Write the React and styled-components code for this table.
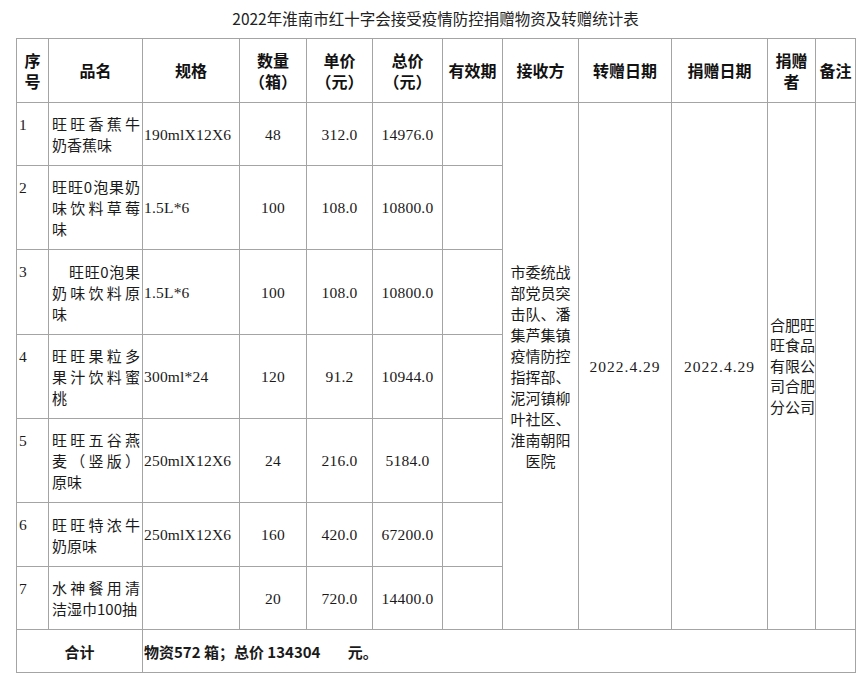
import React from "react";
import styled, { createGlobalStyle } from "styled-components";

const GlobalStyle = createGlobalStyle`
  html, body { margin: 0; padding: 0; background: #ffffff; }
  body { font-family: "Noto Sans CJK SC", "Noto Sans", sans-serif; color: #111; }
`;

const CJK = `"Noto Sans CJK SC", "Noto Sans", sans-serif`;
const SERIF = `"Liberation Serif", "Noto Sans CJK SC", serif`;

const Page = styled.div`
  padding-left: 16px;
  width: 839px;
`;

const Title = styled.h1`
  margin: 0;
  height: 38px;
  line-height: 36px;
  text-align: center;
  font-family: ${CJK};
  font-weight: 400;
  font-size: 15.5px;
  color: #222;
`;

const Table = styled.table`
  width: 839px;
  border-collapse: collapse;
  table-layout: fixed;
  border: 1px solid #9c9c9c;
`;

const Row = styled.tr`
  height: ${(p) => p.$h}px;
`;

const Cell = styled.td`
  border: 1px solid #a4a4a4;
  padding: 0;
  font-size: 15px;
  line-height: 21px;
  vertical-align: middle;
  text-align: center;
  color: #1a1a1a;
  font-family: ${CJK};
`;

const HeadCell = styled(Cell).attrs({ as: "th" })`
  font-weight: 700;
  font-size: 16px;
  line-height: 21px;
  color: #111;
`;

const SerialCell = styled(Cell)`
  vertical-align: top;
  text-align: left;
  padding: 11px 0 0 2px;
  font-family: ${SERIF};
  font-size: 15.5px;
`;

const NameCell = styled(Cell)`
  text-align: justify;
  padding: 0 2px 0 3px;
  text-indent: ${(p) => (p.$indent ? "17px" : "0")};
`;

const NumCell = styled(Cell)`
  font-family: ${SERIF};
  font-size: 15.5px;
  letter-spacing: ${(p) => (p.$wide ? "1px" : "0.2px")};
  text-align: ${(p) => (p.$left ? "left" : "center")};
  padding: ${(p) => (p.$left ? "0 0 0 1px" : "0")};
`;

const BlockCell = styled(Cell)`
  text-align: ${(p) => (p.$left ? "left" : "center")};
  padding: ${(p) => (p.$left ? "0 0 0 2px" : "0 3px")};
  line-height: ${(p) => (p.$lh ? p.$lh : 21)}px;
`;

const TotalLabel = styled(Cell)`
  font-weight: 700;
  font-size: 15px;
`;

const TotalText = styled(Cell)`
  font-weight: 700;
  font-size: 15px;
  text-align: left;
  padding-left: 1px;
  white-space: pre;
`;

const cols = [32, 94, 97, 67, 66, 70, 60, 76, 93, 96, 48, 40];

const items = [
  { n: "1", name: "旺旺香蕉牛奶香蕉味", spec: "190mlX12X6", qty: "48", price: "312.0", total: "14976.0", h: 63 },
  { n: "2", name: "旺旺0泡果奶味饮料草莓味", spec: "1.5L*6", qty: "100", price: "108.0", total: "10800.0", h: 84 },
  { n: "3", name: "旺旺0泡果奶味饮料原味", spec: "1.5L*6", qty: "100", price: "108.0", total: "10800.0", h: 85, indent: true },
  { n: "4", name: "旺旺果粒多果汁饮料蜜桃", spec: "300ml*24", qty: "120", price: "91.2", total: "10944.0", h: 84 },
  { n: "5", name: "旺旺五谷燕麦（竖版）原味", spec: "250mlX12X6", qty: "24", price: "216.0", total: "5184.0", h: 84 },
  { n: "6", name: "旺旺特浓牛奶原味", spec: "250mlX12X6", qty: "160", price: "420.0", total: "67200.0", h: 64 },
  { n: "7", name: "水神餐用清洁湿巾100抽", spec: "", qty: "20", price: "720.0", total: "14400.0", h: 63 },
];

export default function App() {
  return (
    <>
      <GlobalStyle />
      <Page>
        <Title>2022年淮南市红十字会接受疫情防控捐赠物资及转赠统计表</Title>
        <Table>
          <colgroup>
            {cols.map((w, i) => (
              <col key={i} style={{ width: w }} />
            ))}
          </colgroup>
          <tbody>
            <Row $h={64}>
              <HeadCell>序<br />号</HeadCell>
              <HeadCell>品名</HeadCell>
              <HeadCell>规格</HeadCell>
              <HeadCell>数量<br />（箱）</HeadCell>
              <HeadCell>单价<br />（元）</HeadCell>
              <HeadCell>总价<br />（元）</HeadCell>
              <HeadCell>有效期</HeadCell>
              <HeadCell>接收方</HeadCell>
              <HeadCell>转赠日期</HeadCell>
              <HeadCell>捐赠日期</HeadCell>
              <HeadCell>捐赠<br />者</HeadCell>
              <HeadCell>备注</HeadCell>
            </Row>
            {items.map((it, i) => (
              <Row key={it.n} $h={it.h}>
                <SerialCell>{it.n}</SerialCell>
                <NameCell $indent={it.indent}>{it.name}</NameCell>
                <NumCell $left>{it.spec}</NumCell>
                <NumCell>{it.qty}</NumCell>
                <NumCell>{it.price}</NumCell>
                <NumCell>{it.total}</NumCell>
                <Cell />
                {i === 0 && (
                  <>
                    <BlockCell rowSpan={7}>
                      市委统战部党员突击队、潘集芦集镇疫情防控指挥部、泥河镇柳叶社区、淮南朝阳医院
                    </BlockCell>
                    <NumCell rowSpan={7} $wide>2022.4.29</NumCell>
                    <NumCell rowSpan={7} $wide>2022.4.29</NumCell>
                    <BlockCell rowSpan={7} $left $lh={20.6}>
                      合肥旺旺食品有限公司合肥分公司
                    </BlockCell>
                    <Cell rowSpan={7} />
                  </>
                )}
              </Row>
            ))}
            <Row $h={43}>
              <TotalLabel colSpan={2}>合计</TotalLabel>
              <TotalText colSpan={10}>{"物资572 箱；总价 134304        元。"}</TotalText>
            </Row>
          </tbody>
        </Table>
      </Page>
    </>
  );
}
